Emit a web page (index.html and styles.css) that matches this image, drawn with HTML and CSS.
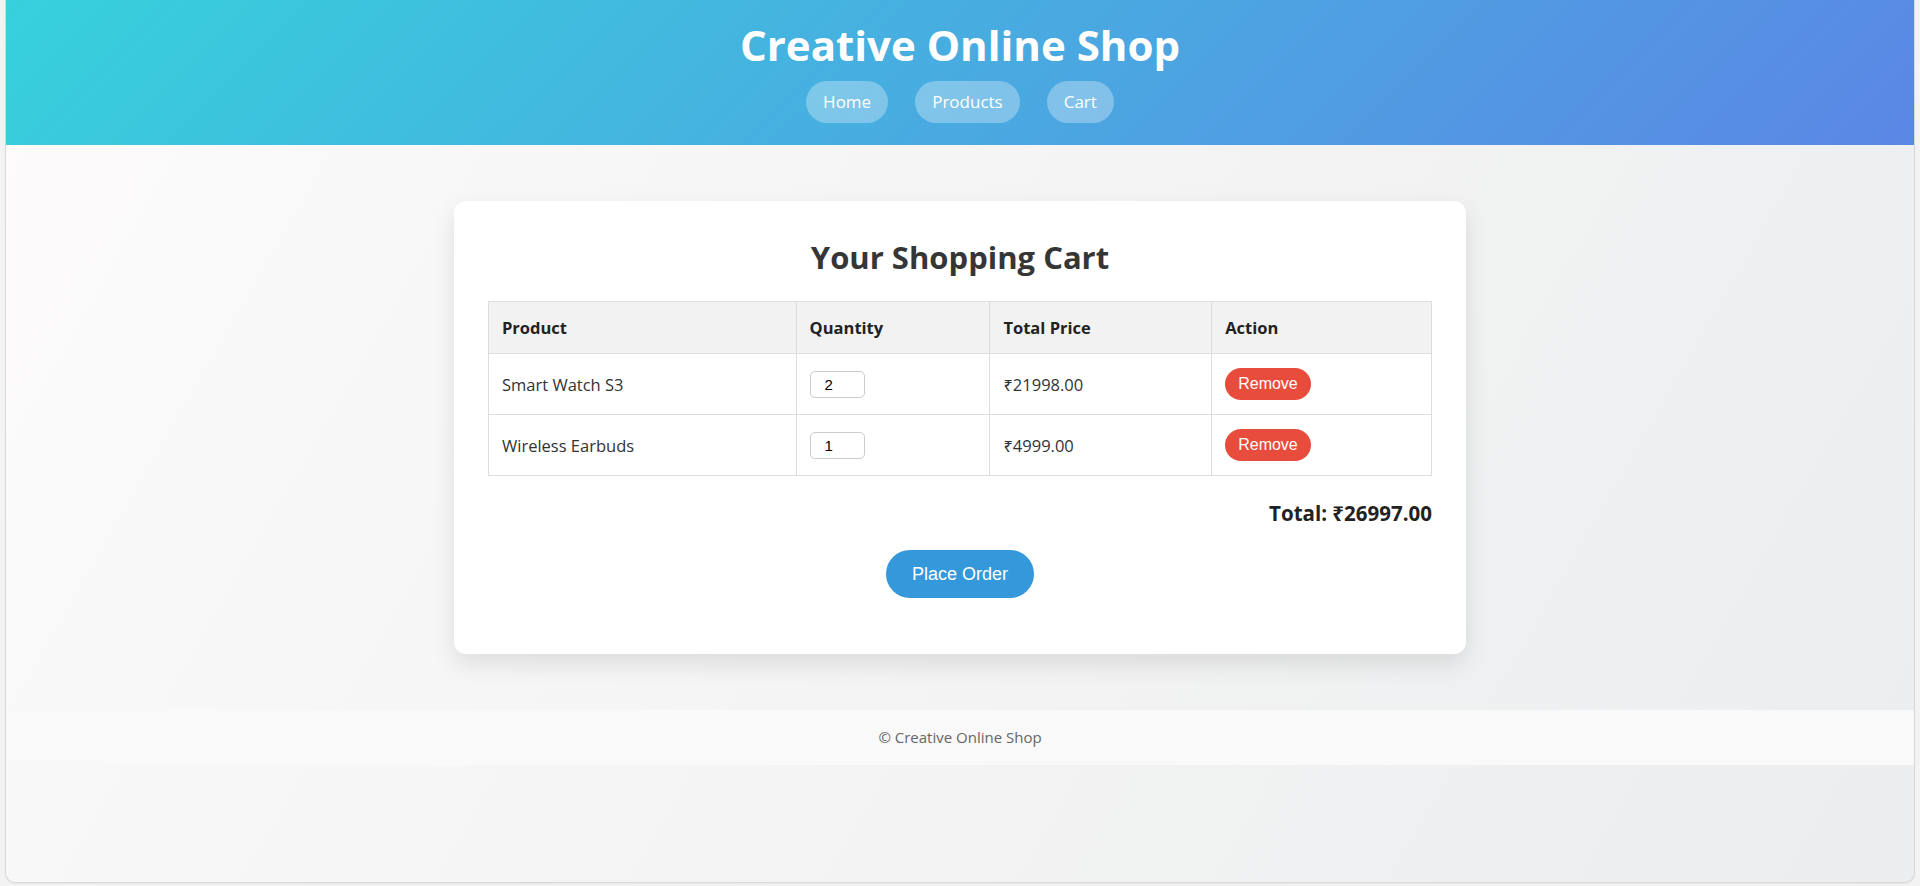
FILE: index.html
```html
<!DOCTYPE html>
<html lang="en">
<head>
<meta charset="utf-8">
<title>Creative Online Shop - Cart</title>
<link rel="stylesheet" href="styles.css">
</head>
<body>
<div class="window">
  <header class="site-header">
    <h1 class="site-title">Creative Online Shop</h1>
    <nav class="nav">
      <a class="nav-link" href="#">Home</a>
      <a class="nav-link" href="#">Products</a>
      <a class="nav-link" href="#">Cart</a>
    </nav>
  </header>
  <main class="main">
    <section class="card">
      <h2 class="card-title">Your Shopping Cart</h2>
      <table class="cart-table">
        <thead>
          <tr>
            <th class="col-product">Product</th>
            <th class="col-qty">Quantity</th>
            <th class="col-price">Total Price</th>
            <th class="col-action">Action</th>
          </tr>
        </thead>
        <tbody>
          <tr>
            <td>Smart Watch S3</td>
            <td><input class="qty" type="text" value="2"></td>
            <td>₹21998.00</td>
            <td><button class="btn-remove">Remove</button></td>
          </tr>
          <tr>
            <td>Wireless Earbuds</td>
            <td><input class="qty" type="text" value="1"></td>
            <td>₹4999.00</td>
            <td><button class="btn-remove">Remove</button></td>
          </tr>
        </tbody>
      </table>
      <p class="total">Total: ₹26997.00</p>
      <div class="actions">
        <button class="btn-order">Place Order</button>
      </div>
    </section>
  </main>
  <footer class="footer">© Creative Online Shop</footer>
</div>
</body>
</html>
```
FILE: styles.css
```css
* { box-sizing: border-box; }

html, body {
  margin: 0;
  padding: 0;
  height: 100%;
}

body {
  background: #f3f3f3;
  font-family: "Open Sans", "Noto Sans", sans-serif;
  color: #333;
  padding: 0 5px 3px 5px;
}

.window {
  height: 883px;
  border: 1px solid #d9d9d9;
  border-top: none;
  border-radius: 0 0 10px 10px;
  overflow: hidden;
  background: linear-gradient(120deg, #fdfbfb 0%, #ebedee 100%);
  display: flex;
  flex-direction: column;
  box-shadow: 0 1px 2px rgba(0,0,0,0.06);
}

.site-header {
  background: linear-gradient(135deg, #36d1dc 0%, #5b86e5 100%);
  color: #fff;
  text-align: center;
  padding: 20px 0 22px;
}

.site-title {
  margin: 0;
  font-size: 42px;
  line-height: 49px;
  font-weight: 700;
}

.nav {
  margin-top: 12px;
  display: flex;
  justify-content: center;
  gap: 27px;
}

.nav-link {
  display: inline-block;
  color: #fff;
  text-decoration: none;
  font-size: 17px;
  line-height: 24px;
  padding: 9px 17px;
  border-radius: 21px;
  background: rgba(255,255,255,0.3);
}

.main {
  padding: 56px 0;
  display: flex;
  justify-content: center;
}

.card {
  width: 1012px;
  background: #fff;
  border-radius: 12px;
  padding: 36px 34px 34px;
  box-shadow: 0 10px 25px rgba(0,0,0,0.1);
}

.card-title {
  margin: 0 0 24px;
  text-align: center;
  font-size: 31px;
  line-height: 40px;
  font-weight: 700;
  color: #363636;
}

.cart-table {
  width: 100%;
  border-collapse: collapse;
  border: 1px solid #ddd;
  font-size: 16.5px;
  line-height: 23px;
}

.cart-table th,
.cart-table td {
  border: 1px solid #ddd;
  padding: 14px 13px;
  text-align: left;
  vertical-align: middle;
}

.cart-table th {
  background: #f2f2f2;
  font-weight: 700;
  color: #222;
}

.col-product { width: 308px; }
.col-qty { width: 194px; }
.col-price { width: 222px; }
.col-action { width: 220px; }

.qty {
  display: block;
  width: 55px;
  height: 27px;
  border: 1px solid #ccc;
  border-radius: 5px;
  padding: 0 0 0 14px;
  font-family: "Liberation Sans", Arial, sans-serif;
  font-size: 15px;
  color: #000;
  background: #fff;
}

.btn-remove {
  display: block;
  height: 32px;
  padding: 0 13px;
  border: none;
  border-radius: 16px;
  background: #e74c3c;
  color: #fff;
  font-family: "Liberation Sans", Arial, sans-serif;
  font-size: 16px;
}

.total {
  margin: 24px 0 0;
  text-align: right;
  font-size: 20.5px;
  line-height: 27px;
  font-weight: 700;
  color: #222;
}

.actions {
  margin-top: 23px;
  margin-bottom: 22px;
  display: flex;
  justify-content: center;
}

.btn-order {
  height: 48px;
  padding: 0 26px;
  border: none;
  border-radius: 24px;
  background: #3498db;
  color: #fff;
  font-family: "Liberation Sans", Arial, sans-serif;
  font-size: 18px;
}

.footer {
  background: #f9f9f9;
  text-align: center;
  color: #666;
  font-size: 15px;
  line-height: 21px;
  padding: 17px 0;
}
```
